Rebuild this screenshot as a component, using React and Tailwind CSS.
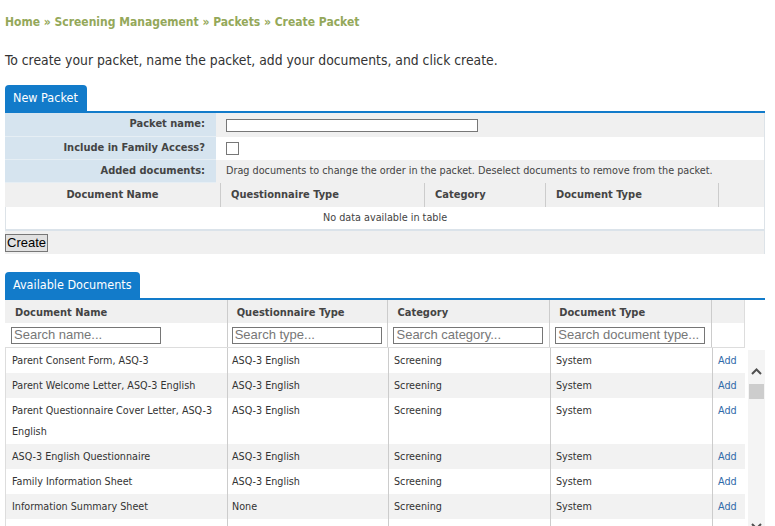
import React from 'react';

// column widths of the available documents table (px)
const cols = ['w-[222px]', 'w-[161px]', 'w-[162px]', 'w-[162px]', 'w-[33px]'];

const docs = [
  { name: 'Parent Consent Form, ASQ-3', type: 'ASQ-3 English', category: 'Screening', docType: 'System' },
  { name: 'Parent Welcome Letter, ASQ-3 English', type: 'ASQ-3 English', category: 'Screening', docType: 'System' },
  { name: 'Parent Questionnaire Cover Letter, ASQ-3', name2: 'English', type: 'ASQ-3 English', category: 'Screening', docType: 'System' },
  { name: 'ASQ-3 English Questionnaire', type: 'ASQ-3 English', category: 'Screening', docType: 'System' },
  { name: 'Family Information Sheet', type: 'ASQ-3 English', category: 'Screening', docType: 'System' },
  { name: 'Information Summary Sheet', type: 'None', category: 'Screening', docType: 'System' },
];

function Tab({ label, width }) {
  return (
    <div className={`${width} h-[26px] rounded-t-[4px] bg-[#127bca] text-white text-[12.5px] leading-[26px] pl-[8px]`}>
      {label}
    </div>
  );
}

function FormRow({ label, children, shade, h }) {
  return (
    <div className={`flex ${h}`}>
      <div className="w-[211px] bg-[#d6e4ef] border-b border-[#e6eef4] text-right pr-[11px] font-bold text-[11px] flex items-center justify-end text-[#444]">
        {label}
      </div>
      <div className={`flex-1 flex items-center pl-[10px] ${shade ? 'bg-[#f0f0f0]' : 'bg-white'}`}>{children}</div>
    </div>
  );
}

function SearchBox({ placeholder }) {
  return (
    <input
      placeholder={placeholder}
      className="w-[150px] h-[17px] border border-[#767676] bg-white px-[2px] text-[13px] font-['Liberation_Sans',Arial,sans-serif] placeholder:text-[#777] outline-none"
    />
  );
}

function Chevron({ down }) {
  return (
    <svg width="11" height="7" viewBox="0 0 11 7" className={down ? 'rotate-180' : ''}>
      <path d="M1 6 L5.5 1.5 L10 6" stroke="#505050" strokeWidth="2" fill="none" />
    </svg>
  );
}

export default function CreatePacketPage() {
  return (
    <div className="min-h-screen bg-white text-[#333] font-['DejaVu_Sans_Condensed','DejaVu_Sans',sans-serif] pt-[14px] pl-[5px] overflow-hidden">
      <nav className="text-[12px] font-bold text-[#94a85a] leading-[16px]">
        Home » Screening Management » Packets » Create Packet
      </nav>
      <p className="mt-[22px] text-[13.8px] leading-[16px] text-[#333]">
        To create your packet, name the packet, add your documents, and click create.
      </p>

      {/* New packet */}
      <section className="w-[760px] mt-[17px]">
        <Tab label="New Packet" width="w-[82px]" />
        <div className="h-[2px] bg-[#127bca]" />
        <div className="border-r border-[#dde3e8]">
          <FormRow label="Packet name:" shade h="h-[24px]">
            <input className="w-[252px] h-[13px] border border-[#777] bg-white outline-none" />
          </FormRow>
          <FormRow label="Include in Family Access?" h="h-[23px]">
            <input type="checkbox" className="appearance-none w-[13px] h-[13px] border border-[#777] bg-white m-0" />
          </FormRow>
          <FormRow label="Added documents:" shade h="h-[23px]">
            <span className="text-[10.75px] text-[#444]">
              Drag documents to change the order in the packet. Deselect documents to remove from the packet.
            </span>
          </FormRow>

          <div className="flex h-[24px] bg-[#f0f0f0] text-[11px] font-bold text-[#444] items-stretch">
            <div className="w-[215px] flex items-center justify-center">Document Name</div>
            <div className="w-[204px] border-l border-[#ccc] flex items-center pl-[10px]">Questionnaire Type</div>
            <div className="w-[121px] border-l border-[#ccc] flex items-center pl-[10px]">Category</div>
            <div className="w-[173px] border-l border-[#ccc] flex items-center pl-[10px]">Document Type</div>
            <div className="flex-1 border-l border-[#ccc]" />
          </div>
          <div className="h-[24px] bg-white border-l border-[#dde3e8] border-b-2 border-b-[#dbe3ea] flex items-center justify-center text-[10.75px] text-[#444]">
            No data available in table
          </div>
          <div className="h-[23px] bg-[#f0f0f0] flex items-center">
            <button className="h-[18px] px-[1px] bg-[#e1e1e1] border border-[#777] text-[13px] leading-[16px] text-black font-['Liberation_Sans',Arial,sans-serif]">
              Create
            </button>
          </div>
        </div>
      </section>

      {/* Available documents */}
      <section className="w-[760px] mt-[18px]">
        <Tab label="Available Documents" width="w-[135px]" />
        <div className="h-[2px] bg-[#127bca]" />

        <div className="w-[740px]">
          <div className="flex h-[23px] bg-[#f0f0f0] text-[11px] font-bold text-[#444] border-r border-[#ddd]">
            <div className={`${cols[0]} pl-[10px] pt-[3px] flex items-center`}>Document Name</div>
            <div className={`${cols[1]} border-l border-[#ccc] pl-[9px] pt-[3px] flex items-center`}>Questionnaire Type</div>
            <div className={`${cols[2]} border-l border-[#ccc] pl-[9px] pt-[3px] flex items-center`}>Category</div>
            <div className={`${cols[3]} border-l border-[#ccc] pl-[9px] pt-[3px] flex items-center`}>Document Type</div>
            <div className={`${cols[4]} border-l border-[#ccc]`} />
          </div>
          <div className="flex h-[25px] bg-white border-b border-[#ddd] border-r border-r-[#ddd]">
            <div className={`${cols[0]} pl-[6px] flex items-center`}><SearchBox placeholder="Search name..." /></div>
            <div className={`${cols[1]} border-l border-[#ccc] pl-[4px] flex items-center`}><SearchBox placeholder="Search type..." /></div>
            <div className={`${cols[2]} border-l border-[#ccc] pl-[5px] flex items-center`}><SearchBox placeholder="Search category..." /></div>
            <div className={`${cols[3]} border-l border-[#ccc] pl-[5px] flex items-center`}><SearchBox placeholder="Search document type..." /></div>
            <div className={`${cols[4]} border-l border-[#ccc]`} />
          </div>
        </div>

        <div className="flex">
          <div className="w-[740px] text-[10.7px] leading-[21px] text-[#333]">
            {docs.map((d, i) => (
              <div key={d.name} className={`flex ${i % 2 ? 'bg-[#f2f2f2]' : 'bg-white'}`}>
                <div className={`${cols[0]} py-[2px] pl-[6px] border-l border-[#ddd]`}>
                  <span className="whitespace-nowrap">{d.name}</span>
                  {d.name2 && <div>{d.name2}</div>}
                </div>
                <div className={`${cols[1]} py-[2px] pl-[4px] border-l border-[#ccc]`}>{d.type}</div>
                <div className={`${cols[2]} py-[2px] pl-[5px] border-l border-[#ccc]`}>{d.category}</div>
                <div className={`${cols[3]} py-[2px] pl-[5px] border-l border-[#ccc]`}>{d.docType}</div>
                <div className={`${cols[4]} py-[2px] pl-[5px] border-l border-[#ccc] text-[#2f6aa8]`}>Add</div>
              </div>
            ))}
            <div className="flex h-[25px] bg-white">
              <div className={`${cols[0]} border-l border-[#ddd]`} />
              <div className={`${cols[1]} border-l border-[#ccc]`} />
              <div className={`${cols[2]} border-l border-[#ccc]`} />
              <div className={`${cols[3]} border-l border-[#ccc]`} />
              <div className={`${cols[4]} border-l border-[#ccc]`} />
            </div>
          </div>

          {/* scrollbar */}
          <div className="ml-[3px] w-[17px] mt-[2px] bg-[#f4f4f4] flex flex-col items-center">
            <div className="h-[34px] flex items-end pb-[9px]">
              <Chevron />
            </div>
            <div className="w-[15px] h-[15px] bg-[#cdcdcd]" />
            <div className="h-[124px]" />
            <Chevron down />
          </div>
        </div>
      </section>
    </div>
  );
}
